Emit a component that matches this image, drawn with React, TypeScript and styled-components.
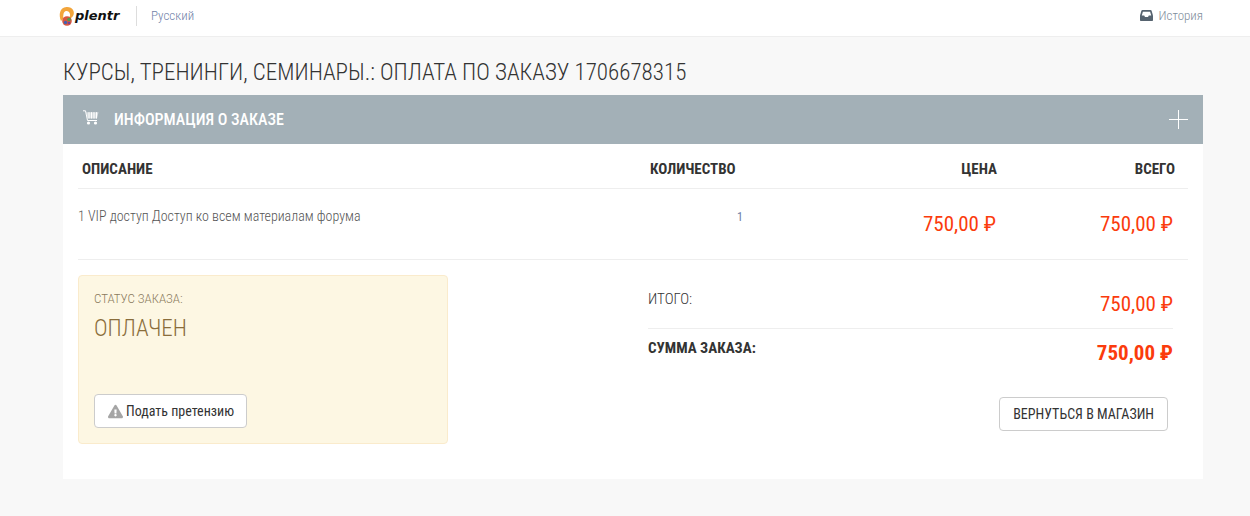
import React from "react";
import styled, { createGlobalStyle } from "styled-components";
import { FaExclamationTriangle } from "react-icons/fa";

const GlobalStyle = createGlobalStyle`
  html, body {
    margin: 0;
    padding: 0;
    background: #f8f8f8;
    font-family: "Roboto", "Liberation Sans Narrow", sans-serif;
    font-stretch: 75%;
    color: #555;
  }
  * { box-sizing: border-box; }
`;

const App = () => {
  return (
    <>
      <GlobalStyle />
      <TopBar>
        <Brand>
          <LogoMark viewBox="0 0 18 20">
            <path d="M3 15C.5 9 1.500 1.500 8.500 1c6-.4 9 5 6.500 9-1.500 2.500-4 3-6 2.500 2.500-.5 3.500-2.500 3-4.500-.6-2.500-3-3.500-5-2.500C5 6.500 5.500 10 5 13z" fill="#f2a53b" />
            <circle cx="9" cy="15" r="4.800" fill="#d8573f" />
            <circle cx="11" cy="13.500" r="1.800" fill="#4fa04a" />
            <circle cx="7.500" cy="16.500" r="1.700" fill="#3f63b0" />
            <circle cx="11" cy="17" r="1.300" fill="#7b3f98" />
          </LogoMark>
          <LogoText>plentr</LogoText>
        </Brand>
        <Lang>Русский</Lang>
        <History>
          <InboxIcon viewBox="0 0 13 11">
            <path d="M2.500 0h8c.5 0 .9.3 1.100.8L13 5.500V10c0 .6-.4 1-1 1H1c-.6 0-1-.4-1-1V5.500L1.400.8C1.600.3 2 0 2.500 0z" fill="#56636f" />
            <path d="M2.900 1.800h7.200L11.200 5.500H8.800L8 7H5L4.200 5.500H1.800z" fill="#fff" />
          </InboxIcon>
          История
        </History>
      </TopBar>
      <Page>
        <Title>КУРСЫ, ТРЕНИНГИ, СЕМИНАРЫ.: ОПЛАТА ПО ЗАКАЗУ 1706678315</Title>
        <Panel>
          <PanelHead>
            <CartIcon viewBox="0 0 16 15">
              <path d="M0 .8h2.500L4.500 10.500h9.500" fill="none" stroke="#fff" strokeWidth="1" />
              <path d="M3.200 2.200H15.500L14 8.500H4.500z" fill="#fff" fillOpacity=".55" />
              <path d="M6 2.200v6.300M8.500 2.200v6.300M11 2.200v6.300M13.500 2.200v6.300" stroke="#fff" strokeWidth="1" />
              <circle cx="5.500" cy="13" r="1.600" fill="#fff" />
              <circle cx="12.500" cy="13" r="1.600" fill="#fff" />
            </CartIcon>
            <PanelTitle>ИНФОРМАЦИЯ О ЗАКАЗЕ</PanelTitle>
            <PlusIcon viewBox="0 0 19 19">
              <path d="M9.500 0v19M0 9.500h19" stroke="#fff" strokeWidth="1" />
            </PlusIcon>
          </PanelHead>
          <PanelBody>
            <HeadRow>
              <HeadCell>ОПИСАНИЕ</HeadCell>
              <HeadCell>КОЛИЧЕСТВО</HeadCell>
              <HeadCell $right>ЦЕНА</HeadCell>
              <HeadCell $right>ВСЕГО</HeadCell>
            </HeadRow>
            <ItemRow>
              <ItemName>1 VIP доступ Доступ ко всем материалам форума</ItemName>
              <ItemQty>1</ItemQty>
              <ItemPrice>750,00 ₽</ItemPrice>
              <ItemPrice>750,00 ₽</ItemPrice>
            </ItemRow>
            <Bottom>
              <StatusBox>
                <StatusLabel>СТАТУС ЗАКАЗА:</StatusLabel>
                <StatusValue>ОПЛАЧЕН</StatusValue>
                <ClaimButton>
                  <WarnIcon size={15} color="#a5a5a5" />
                  Подать претензию
                </ClaimButton>
              </StatusBox>
              <Summary>
                <SumRow>
                  <SumLabel>ИТОГО:</SumLabel>
                  <Price>750,00 ₽</Price>
                </SumRow>
                <SumRow $total>
                  <SumLabel $total>СУММА ЗАКАЗА:</SumLabel>
                  <Price $bold>750,00 ₽</Price>
                </SumRow>
                <BackButton>ВЕРНУТЬСЯ В МАГАЗИН</BackButton>
              </Summary>
            </Bottom>
          </PanelBody>
        </Panel>
      </Page>
    </>
  );
};

const TopBar = styled.header`
  display: flex;
  align-items: center;
  height: 37px;
  padding: 0 47px 5px 58px;
  background: #fff;
  border-bottom: 1px solid #eee;
`;

const Brand = styled.div`
  display: flex;
  align-items: center;
  width: 79px;
  height: 20px;
  border-right: 1px solid #ddd;
`;

const LogoMark = styled.svg`
  width: 18px;
  height: 20px;
`;

const LogoText = styled.span`
  font-family: "DejaVu Sans", sans-serif;
  font-stretch: 100%;
  font-size: 13px;
  font-weight: 700;
  font-style: italic;
  color: #111;
  margin-left: -1px;
`;

const Lang = styled.span`
  margin-left: 14px;
  font-size: 13px;
  font-weight: 300;
  color: #6f7fa8;
`;

const History = styled.span`
  margin-left: auto;
  display: flex;
  align-items: center;
  gap: 6px;
  font-size: 13px;
  font-weight: 300;
  color: #7d8b99;
`;

const InboxIcon = styled.svg`
  width: 13px;
  height: 11px;
`;

const Page = styled.main`
  padding: 20px 47px 38px 63px;
`;

const Title = styled.h1`
  margin: 0 0 8px;
  padding-top: 1px;
  font-size: 23px;
  line-height: 29px;
  font-weight: 300;
  color: #333;
`;

const Panel = styled.section`
  background: #fff;
`;

const PanelHead = styled.div`
  display: flex;
  align-items: center;
  height: 49px;
  padding: 0 15px 0 20px;
  background: #a3b0b7;
`;

const CartIcon = styled.svg`
  width: 16px;
  height: 15px;
  margin-bottom: 5px;
`;

const PanelTitle = styled.span`
  margin-left: 15px;
  font-size: 16px;
  font-weight: 500;
  color: #fff;
`;

const PlusIcon = styled.svg`
  margin-left: auto;
  width: 19px;
  height: 19px;
`;

const PanelBody = styled.div`
  padding: 0 15px;
`;

const HeadRow = styled.div`
  display: grid;
  grid-template-columns: 568px 150px 197px 178px;
  height: 45px;
  padding: 5px 0 0 4px;
  align-items: center;
  border-bottom: 1px solid #eee;
`;

const HeadCell = styled.div<{ $right?: boolean }>`
  font-size: 15px;
  font-weight: 700;
  color: #333;
  text-align: ${(p) => (p.$right ? "right" : "left")};
`;

const ItemRow = styled.div`
  display: grid;
  grid-template-columns: 572px 93px 253px 177px;
  height: 71px;
  padding-top: 19px;
  border-bottom: 1px solid #eee;
`;

const ItemName = styled.div`
  font-size: 14px;
  font-weight: 300;
  color: #555;
`;

const ItemQty = styled.div`
  padding-top: 2px;
  font-size: 12px;
  color: #6f7fa8;
  text-align: right;
`;

const Price = styled.div<{ $bold?: boolean }>`
  font-size: 21px;
  line-height: 29px;
  font-weight: ${(p) => (p.$bold ? 700 : 400)};
  color: #fb3b0c;
  text-align: right;
`;

const ItemPrice = styled(Price)`
  margin-top: 2px;
`;

const Bottom = styled.div`
  display: flex;
  justify-content: space-between;
  padding: 15px 15px 35px 0;
`;

const StatusBox = styled.div`
  display: flex;
  flex-direction: column;
  align-items: flex-start;
  width: 370px;
  height: 169px;
  padding: 15px;
  background: #fdf7e3;
  border: 1px solid #faebcc;
  border-radius: 4px;
`;

const StatusLabel = styled.div`
  font-size: 13px;
  font-weight: 300;
  color: #8a7a5c;
`;

const StatusValue = styled.div`
  margin-top: 9px;
  font-size: 23px;
  font-weight: 300;
  color: #8a6d3b;
`;

const ClaimButton = styled.button`
  display: flex;
  align-items: center;
  gap: 3px;
  margin-top: auto;
  width: 153px;
  height: 34px;
  padding: 0 13px;
  background: #fff;
  border: 1px solid #ccc;
  border-radius: 4px;
  font: inherit;
  font-size: 14px;
  color: #333;
  white-space: nowrap;
`;

const WarnIcon = styled(FaExclamationTriangle)`
  flex: none;
`;

const Summary = styled.div`
  display: flex;
  flex-direction: column;
  width: 525px;
`;

const SumRow = styled.div<{ $total?: boolean }>`
  display: flex;
  justify-content: space-between;
  height: 53px;
  padding-top: ${(p) => (p.$total ? "10px" : "15px")};
  border-top: ${(p) => (p.$total ? "1px solid #eee" : "none")};
`;

const SumLabel = styled.div<{ $total?: boolean }>`
  font-size: 15px;
  font-weight: ${(p) => (p.$total ? 700 : 300)};
  color: #333;
`;

const BackButton = styled.button`
  align-self: flex-end;
  margin: 16px 5px 0 0;
  height: 34px;
  padding: 0 13px;
  background: #fff;
  border: 1px solid #ccc;
  border-radius: 4px;
  font: inherit;
  font-size: 14px;
  color: #333;
`;

export default App;
